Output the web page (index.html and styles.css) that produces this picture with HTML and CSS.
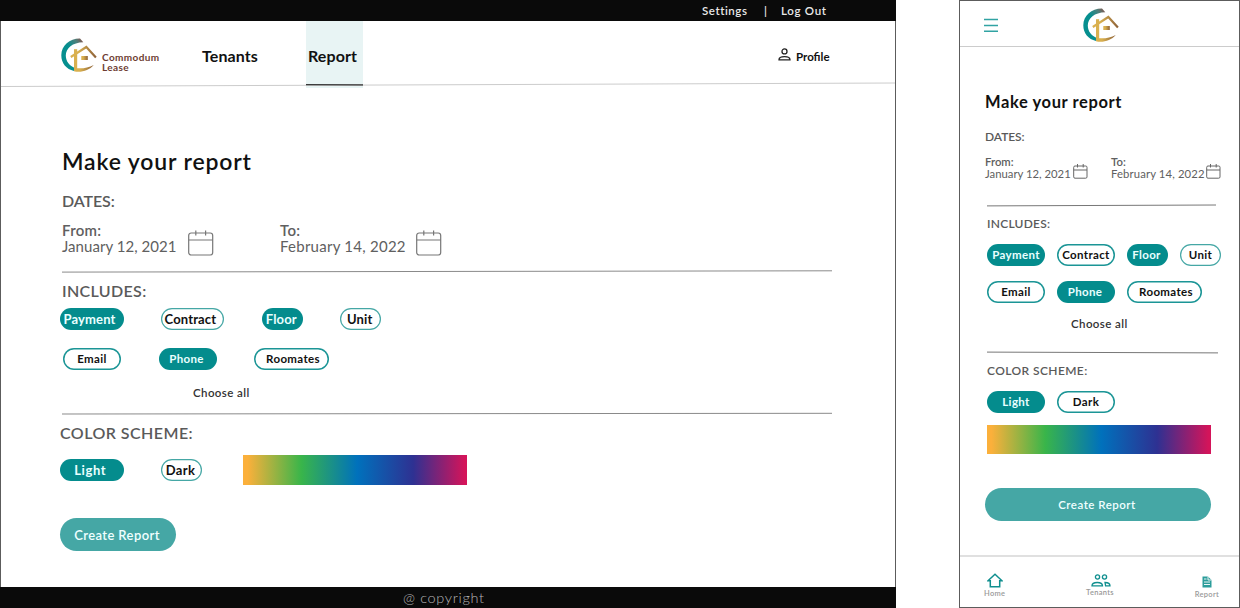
FILE: index.html
```html
<!DOCTYPE html>
<html lang="en">
<head>
<meta charset="utf-8">
<title>Commodum Lease – Make your report</title>
<link rel="stylesheet" href="styles.css">
</head>
<body>
<svg class="defs" width="0" height="0" aria-hidden="true">
  <defs>
    <linearGradient id="ring" x1="0" y1="1" x2="1" y2="0">
      <stop offset="0.55" stop-color="#068f8f"/><stop offset="0.8" stop-color="#4f7f7b"/><stop offset="1" stop-color="#8a4a42"/>
    </linearGradient>
    <linearGradient id="gold" x1="0" y1="0" x2="1" y2="0">
      <stop offset="0.3" stop-color="#d9b04f"/><stop offset="1" stop-color="#8e6238"/>
    </linearGradient>
    <symbol id="logo" viewBox="0 0 36 34">
      <path fill="url(#ring)" d="M19 .6C9 .4.3 7.500.3 17.300c0 8 5 14 12.700 15.700l.3-3.200C8.500 27.800 4.800 23.400 4.800 17.600 4.800 10.300 11.500 4.500 22.300 4.300Z"/>
      <path fill="url(#gold)" d="M13 29.800c7 1.300 13.500.3 19.800-2.800C28 32.500 20 35 13 33.300Z"/>
      <path fill="#d9b04f" d="M13 11.200h3.200V31H13Z"/>
      <path fill="none" stroke="url(#gold)" stroke-width="2.200" d="M9.800 19 25.300 9 34.900 19.500"/>
      <path fill="url(#gold)" d="M20.300 18h6.500v4h-6.500Z"/>
    </symbol>
    <symbol id="calendar" viewBox="0 0 26 26">
      <g fill="none" stroke="currentColor" stroke-width="1.200">
        <rect x=".7" y="3" width="24" height="22" rx="2.500"/>
        <path d="M.7 10H24.700M7.800.5V5.500M17.600 .5V5.500"/>
      </g>
    </symbol>
    <symbol id="calendar-small" viewBox="0 0 15 15">
      <g fill="none" stroke="currentColor" stroke-width="1">
        <rect x=".7" y="2" width="13.300" height="12.200" rx="1.300"/>
        <path d="M.7 6H14M4.500 0V3.500M10.200 0V3.500"/>
      </g>
    </symbol>
  </defs>
</svg>

<div class="stage">
  <section class="desktop">
    <div class="topbar"><span class="settings">Settings</span><span class="bar">|</span><span class="logout">Log Out</span></div>
    <header class="header">
      <svg class="logo"><use href="#logo"/></svg>
      <div class="brand"><span class="brand-a">Commodum</span><span class="brand-b">Lease</span></div>
      <a class="nav-tenants">Tenants</a>
      <a class="nav-report"><span>Report</span></a>
      <div class="profile">
        <svg width="13" height="13" viewBox="0 0 13 13" fill="none" stroke="#222" stroke-width="1.300"><circle cx="6.500" cy="3.400" r="2.500"/><path d="M1 11.800C1 9.600 3.500 8.700 6.500 8.700s5.500.9 5.500 3.100Z"/></svg>
        <span>Profile</span>
      </div>
      <svg class="header-rule" viewBox="0 0 894 6"><path d="M0 4.500 894 1" stroke="#ccc" stroke-width="1"/></svg>
    </header>
    <main class="main">
      <h1 class="title">Make your report</h1>
      <h2 class="label dates">DATES:</h2>
      <div class="range">
        <div class="date from"><b>From:</b><span>January 12, 2021</span></div>
        <svg class="cal"><use href="#calendar"/></svg>
        <div class="date to"><b>To:</b><span>February 14, 2022</span></div>
        <svg class="cal"><use href="#calendar"/></svg>
      </div>
      <svg class="rule" viewBox="0 0 770 3"><path d="M0 2.100 770 .8" stroke="#8a8a8a"/></svg>
      <h2 class="label includes">INCLUDES:</h2>
      <div class="row row-a">
        <span class="pill on w-l big payment">Payment</span>
        <span class="pill thin w-l big contract">Contract</span>
        <span class="pill on w-s big floor">Floor</span>
        <span class="pill thin w-s big unit">Unit</span>
      </div>
      <div class="row row-b">
        <span class="pill w-m email">Email</span>
        <span class="pill on w-m phone">Phone</span>
        <span class="pill w-x roomates">Roomates</span>
      </div>
      <a class="choose">Choose all</a>
      <svg class="rule" viewBox="0 0 770 3"><path d="M0 2 770 1.300" stroke="#8a8a8a"/></svg>
      <h2 class="label scheme">COLOR SCHEME:</h2>
      <div class="scheme-row">
        <span class="pill on w-l big light">Light</span>
        <span class="pill thin w-s big dark">Dark</span>
        <div class="spectrum"></div>
      </div>
      <a class="create">Create Report</a>
    </main>
    <footer class="footer">@ copyright</footer>
  </section>

  <section class="mobile">
    <header class="m-header">
      <svg class="burger" viewBox="0 0 14 14"><path d="M0 1.500H14M0 7.500H14M0 13.300H14" stroke="#31a3a3" stroke-width="1.400"/></svg>
      <svg class="logo"><use href="#logo"/></svg>
    </header>
    <main class="m-main">
      <h1 class="m-title">Make your report</h1>
      <h2 class="m-label m-dates">DATES:</h2>
      <div class="m-range">
        <div class="m-date m-from"><b>From:</b><span>January 12, 2021</span></div>
        <svg class="m-cal"><use href="#calendar-small"/></svg>
        <div class="m-date m-to"><b>To:</b><span>February 14, 2022</span></div>
        <svg class="m-cal"><use href="#calendar-small"/></svg>
      </div>
      <svg class="m-rule" width="229" height="3" viewBox="0 0 229 3"><path d="M0 1.900 229 1" stroke="#777"/></svg>
      <h2 class="m-label m-includes">INCLUDES:</h2>
      <div class="m-row m-row-a">
        <span class="pill on w-m">Payment</span>
        <span class="pill w-m">Contract</span>
        <span class="pill on w-s m-floor">Floor</span>
        <span class="pill thin w-s">Unit</span>
      </div>
      <div class="m-row m-row-b">
        <span class="pill w-m">Email</span>
        <span class="pill on w-m phone">Phone</span>
        <span class="pill w-x roomates">Roomates</span>
      </div>
      <a class="choose m-choose">Choose all</a>
      <svg class="m-rule" width="231" height="3" viewBox="0 0 231 3"><path d="M0 1.100 231 1.900" stroke="#777"/></svg>
      <h2 class="m-label m-scheme">COLOR SCHEME:</h2>
      <div class="m-row m-row-c">
        <span class="pill on w-m">Light</span>
        <span class="pill w-m">Dark</span>
      </div>
      <div class="spectrum m-spectrum"></div>
      <a class="create m-create">Create Report</a>
    </main>
    <nav class="tabs">
      <a class="tab"><svg width="16" height="15" viewBox="0 0 16 15" fill="none" stroke="#108f8f" stroke-width="1.500"><path d="M1 7.800 8 1.300 15 7.800H12.700V13.700H3.300V7.800Z"/></svg><span>Home</span></a>
      <a class="tab tab-tenants"><svg width="20" height="13" viewBox="0 0 20 13" fill="none" stroke="#108f8f" stroke-width="1.300"><circle cx="6.500" cy="3" r="2.100"/><circle cx="13.500" cy="3" r="2.100"/><path d="M1 11.800C1 9.300 3.200 8.500 6.200 8.500S11.500 9.300 11.500 11.800ZM14 8.500c3 0 5 .8 5 3.300H14.600Z"/></svg><span>Tenants</span></a>
      <a class="tab tab-report"><svg width="10" height="12" viewBox="0 0 10 12"><path fill="#2c9d9b" d="M.5.500H6L9.500 4V11.500H.5Z"/><path fill="none" stroke="#fff" stroke-width=".9" d="M2 3H4.500M2 6H8M2 8.500H8M6 .5V4H9.500"/></svg><span>Report</span></a>
    </nav>
  </section>
</div>
</body>
</html>
```
FILE: styles.css
```css
* { box-sizing: border-box; }
body { margin: 0; background: #fff; font-family: Lato, "Liberation Sans", sans-serif; color: #111; overflow: hidden; }
h1, h2 { margin: 0; }
svg { display: block; flex: none; }
.defs { position: absolute; }
.stage { display: flex; justify-content: space-between; width: 1240px; height: 608px; }
span, a, b, h1, h2 { white-space: nowrap; }

/* Desktop frame */
.desktop { display: flex; flex-direction: column; width: 896px; height: 608px; border: solid #5c5c5c; border-width: 0 1px; }
.topbar { display: flex; height: 21px; margin: 0 -1px; padding-left: 702px; background: #0a0a0a; color: #e8e8e8; font-size: 11.500px; font-weight: 600; line-height: 21px; letter-spacing: .55px; }
.settings { width: 62px; }
.bar { width: 17px; }
.logout { letter-spacing: .7px; }
.header { position: relative; display: flex; height: 66px; padding-left: 60px; }
.logo { width: 36px; height: 34px; }
.header .logo { margin-top: 17px; }
.brand { display: flex; flex-direction: column; flex: none; width: 105px; padding: 31px 0 0 5px; font-size: 10px; line-height: 10px; font-weight: 700; letter-spacing: .4px; color: #6d3c32; }
.nav-tenants { flex: none; width: 104px; padding-top: 25px; font-size: 16px; font-weight: 700; line-height: 20px; letter-spacing: .1px; }
.nav-report { flex: none; width: 57px; height: 67px; padding: 25px 0 0 2px; background: #e8f4f4; font-size: 16px; font-weight: 700; line-height: 20px; letter-spacing: .1px; }
.nav-report::after { content: ""; display: block; height: 2px; margin: 18px 0 0 -2px; background: #111; }
.profile { display: flex; gap: 5px; margin-left: 415px; padding-top: 27px; font-size: 11.500px; font-weight: 700; line-height: 17px; }
.header-rule { position: absolute; left: 0; top: 61px; width: 894px; height: 6px; }

.main { display: flex; flex-direction: column; align-items: flex-start; height: 500px; padding: 59px 0 0 61px; }
.title { font-size: 23px; font-weight: 600; line-height: 30px; letter-spacing: .85px; }
.label { color: #5a5a5a; font-size: 16px; font-weight: 600; line-height: 20px; }
.dates { margin-top: 15px; letter-spacing: -.1px; }
.range { display: flex; margin-top: 11px; height: 33px; color: #606060; font-size: 15px; line-height: 16px; }
.date, .m-date { display: flex; flex-direction: column; flex: none; }
.date b, .m-date b { font-weight: 600; }
.date b { letter-spacing: .3px; }
.from { width: 126px; letter-spacing: .05px; }
.to { width: 136px; margin-left: 66px; letter-spacing: .25px; }
.cal { width: 26px; height: 26px; margin-top: 8px; color: #777; }
.rule { width: 770px; height: 3px; margin-top: 15px; }
.includes { margin-top: 8px; letter-spacing: .35px; }
.row { display: flex; height: 22px; }
.row-a { gap: 37.400px; margin: 7px 0 0 -2px; }
.row-b { gap: 37.500px; margin: 18px 0 0 1px; }
.pill { display: block; flex: none; height: 22px; border-radius: 11px; box-shadow: inset 0 0 0 1.500px #1b9596; color: #111; font-size: 11.500px; font-weight: 700; line-height: 22px; letter-spacing: .35px; text-align: center; }
.pill.thin { box-shadow: inset 0 0 0 1.200px #45a7a5; }
.pill.on { box-shadow: none; background: #048c8d; color: #e9ffff; }
.pill.big { font-size: 13px; letter-spacing: .15px; }
.w-l { width: 63.500px; }
.w-m { width: 58px; }
.w-s { width: 41px; }
.w-x { width: 75px; }
.payment, .contract { padding-right: 4.500px; }
.floor, .m-floor, .unit, .dark { padding-right: 2px; }
.light { padding-right: 3px; }
.pill.light { letter-spacing: .6px; }
.pill.dark { letter-spacing: .3px; }
.phone { padding-right: 2px; }
.roomates { padding-left: 3px; }
.choose { margin: 15px 0 0 131px; color: #333; font-size: 11.500px; font-weight: 600; line-height: 16px; letter-spacing: .4px; }
.choose + .rule { margin-top: 11px; }
.scheme { margin: 8px 0 0 -2px; letter-spacing: .45px; }
.scheme-row { display: flex; align-items: flex-start; height: 30px; margin: 12px 0 0 -2px; }
.scheme-row .pill { margin: 4px 37.500px 0 0; }
.scheme-row .dark { margin-right: 41px; }
.spectrum { flex: none; width: 224px; height: 29.500px; background: linear-gradient(90deg, #fbb03b 2%, #39b54a 26%, #0071bc 51%, #2e3192 76%, #d4145a 99%); }
.create { flex: none; width: 116px; height: 33px; margin: 33px 0 0 -2px; padding-right: 2px; border-radius: 17px; background: #45a7a5; color: #f0ffff; font-size: 13px; font-weight: 600; line-height: 34px; letter-spacing: .4px; text-align: center; }
.footer { height: 21px; margin: 0 -1px; padding-left: 403px; background: #0a0a0a; color: #b8b8b8; font-size: 14.500px; font-weight: 300; line-height: 22px; letter-spacing: .65px; }

/* Mobile frame */
.mobile { display: flex; flex-direction: column; width: 281px; height: 608px; border: 1px solid #5c5c5c; }
.m-header { display: flex; flex: none; height: 46px; padding-left: 24px; border-bottom: 1px solid #ccc; }
.burger { width: 14px; height: 14px; margin-top: 16.500px; }
.m-header .logo { margin: 7px 0 0 85px; }
.m-main { display: flex; flex: none; flex-direction: column; align-items: flex-start; height: 508px; padding: 44px 0 0 25px; }
.m-title { font-size: 16.500px; font-weight: 700; line-height: 22px; letter-spacing: .6px; }
.m-label { color: #5a5a5a; font-size: 12px; font-weight: 600; line-height: 16px; }
.m-dates { margin-top: 16px; letter-spacing: -.05px; }
.m-range { display: flex; height: 24px; margin-top: 11px; color: #606060; font-size: 11.300px; line-height: 12px; }
.m-from { width: 88px; }
.m-to { width: 95px; margin-left: 23px; letter-spacing: .12px; }
.m-cal { width: 15px; height: 15px; margin-top: 8px; color: #666; }
.m-rule { margin: 24px 0 0 2px; }
.m-includes { margin: 9px 0 0 2px; letter-spacing: .25px; }
.m-row { display: flex; gap: 12px; margin-left: 2px; }
.m-row-a { margin-top: 12px; }
.m-row-b { margin-top: 15px; }
.m-choose { margin: 13px 0 0 86px; }
.m-choose + .m-rule { margin-top: 18.500px; }
.m-scheme { margin: 9.500px 0 0 2px; letter-spacing: .4px; }
.m-row-c { margin-top: 11.500px; }
.m-spectrum { margin: 12px 0 0 2px; }
.m-create { width: 226px; margin: 34px 0 0; font-size: 11.500px; letter-spacing: .5px; }
.tabs { display: flex; flex: none; height: 52px; padding: 16px 20px 0 24px; border-top: 2px solid #e0e0e0; justify-content: space-between; }
.tab { display: flex; flex-direction: column; align-items: center; color: #999; font-size: 7.500px; font-weight: 600; line-height: 9px; letter-spacing: .3px; }
.tab span { margin-top: 1px; }
.tab-tenants svg { margin: 1px 0 0 1px; }
.tab-report svg { margin-top: 3px; }
.tab-report span { margin-top: 2px; }
```
